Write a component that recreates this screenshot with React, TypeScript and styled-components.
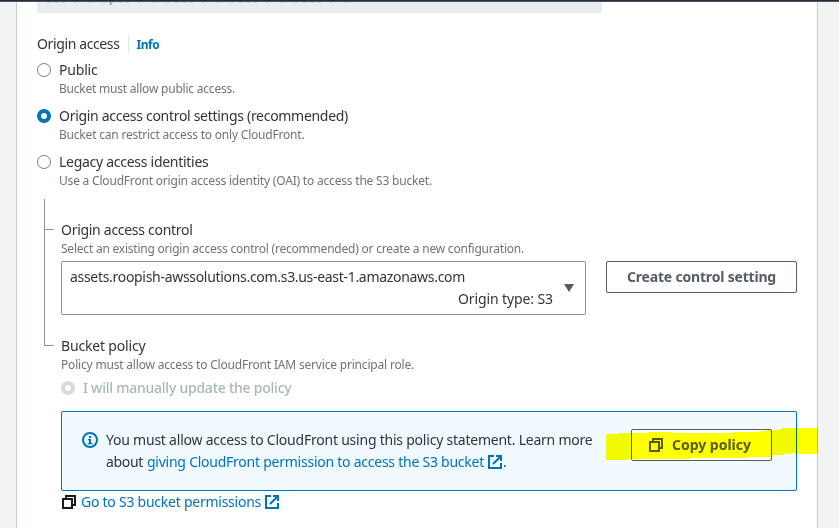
import React from "react";
import styled, { createGlobalStyle, css } from "styled-components";

const GlobalStyle = createGlobalStyle`
  * { box-sizing: border-box; }
  html, body { margin: 0; height: 528px; overflow: hidden; }
  body {
    background: #f2f3f3;
    color: #16191f;
    font: 400 14px/22px "Noto Sans", "Open Sans", sans-serif;
  }
`;

type Tracked = { $track?: number };
const tracking = css<Tracked>`
  letter-spacing: ${({ $track = -0.22 }) => $track}px;
  white-space: nowrap;
`;

const Page = styled.div`
  height: 528px;
  display: flex;
  flex-direction: column;
  overflow: hidden;
`;

const TopBar = styled.header`
  flex: none;
  height: 2px;
  background: #232f3e;
  border-bottom: 1px solid #4b5563;
`;

const Panel = styled.main`
  position: relative;
  width: 802px;
  flex: 1;
  margin-left: 16px;
  padding-left: 20px;
  background: #fff;
  border: solid #c3cbcd;
  border-width: 0 1px;
`;

const DisabledField = styled.div`
  width: 565px;
  height: 11px;
  overflow: hidden;
  background: #eaeded;
  border-radius: 0 0 2px 2px;
`;

const ClippedValue = styled.svg`
  display: block;
  width: 320px;
  height: 4px;
`;

const FieldHeader = styled.div`
  display: flex;
  align-items: center;
  height: 22px;
  margin-top: 20px;
`;

const Label = styled.div<Tracked>`
  height: 22px;
  color: #30343b;
  ${tracking}
`;

const InfoLink = styled.a<Tracked>`
  height: 18px;
  margin-left: 8px;
  padding-left: 8px;
  border-left: 1px solid #e3e8e8;
  color: #0073bb;
  font-size: 12px;
  font-weight: 700;
  line-height: 20px;
  ${tracking}
`;

const Description = styled.div<Tracked>`
  height: 16px;
  color: #6c747c;
  font-size: 12px;
  line-height: 16px;
  ${tracking}
`;

const RadioList = styled.div`
  display: grid;
  gap: 8px;
  margin-top: 4px;
`;

const RadioRow = styled.label`
  display: flex;
  gap: 8px;
`;

const RadioDot = styled.span<{ $state: "off" | "on" | "disabled" }>`
  flex: none;
  width: 14px;
  height: 14px;
  margin-top: 4px;
  border-radius: 50%;
  background: #fff;
  border: ${({ $state }) =>
    $state === "off" ? "1px solid #748284" : $state === "on" ? "4px solid #0073bb" : "4px solid #d5dbdb"};
`;

const DisabledLabel = styled(Label)`
  color: #aab7b8;
  font-weight: 500;
`;

const Nested = styled.section`
  display: flex;
  margin-top: 10px;
  padding-left: 7px;
`;

const Tree = styled.div`
  flex: none;
  width: 17px;
`;

const Branch = styled.div<{ $height: number }>`
  width: 10px;
  height: ${({ $height }) => $height}px;
  border: solid #879596;
  border-width: 0 0 1px 1px;
`;

const NestedBody = styled.div`
  width: 736px;
  padding-top: 20px;
`;

const ControlRow = styled.div`
  display: flex;
  align-items: flex-start;
  justify-content: space-between;
  margin-top: 4px;
`;

const Select = styled.div`
  display: flex;
  align-items: center;
  width: 525px;
  height: 54px;
  padding: 0 11px 0 8px;
  border: 1px solid #879596;
  border-radius: 2px;
`;

const SelectText = styled.div`
  display: grid;
  flex: 1;
  padding-right: 11px;
`;

const OriginType = styled(Label)`
  justify-self: end;
`;

const Button = styled.button<Tracked & { $width: number }>`
  display: flex;
  align-items: center;
  justify-content: center;
  flex: none;
  gap: 8px;
  width: ${({ $width }) => $width}px;
  height: 32px;
  padding: 0;
  background: #fff;
  border: 1px solid #545b64;
  border-radius: 2px;
  color: #545b64;
  font: 700 14px/20px "Noto Sans", sans-serif;
  ${tracking}
`;

const CopyButton = styled(Button)`
  gap: 9px;
  padding-right: 3px;
`;

const PolicyBlock = styled.div`
  margin-top: 20px;
`;

const PolicyOption = styled(RadioRow)`
  margin-top: 4px;
`;

const Alert = styled.div`
  display: flex;
  align-items: flex-start;
  height: 80px;
  margin-top: 12px;
  padding: 17px 24px 0 20px;
  background: #f1faff;
  border: 1px solid #0073bb;
  border-radius: 2px;
`;

const AlertIcon = styled.svg`
  flex: none;
  width: 16px;
  height: 16px;
  margin: 3px 8px 0 0;
`;

const AlertText = styled.div`
  flex: 1;
`;

const Line = styled.div`
  display: flex;
  align-items: center;
  height: 22px;
`;

const Link = styled.a<Tracked>`
  color: #0073bb;
  ${tracking}
`;

const Glyph = styled.svg<{ $left?: number }>`
  flex: none;
  width: 14px;
  height: 14px;
  margin-left: ${({ $left = 0 }) => $left}px;
`;

const InlineLabel = styled(Label)`
  margin-right: 4px;
`;

const Period = styled(Label)`
  margin-left: 1px;
`;

const FooterLink = styled(Link)`
  margin-left: 5px;
`;

const Marker = styled.svg`
  position: absolute;
  left: 589px;
  top: 426px;
  width: 212px;
  height: 33px;
  mix-blend-mode: multiply;
  pointer-events: none;
`;

const CopyIcon = ({ left, color }: { left?: number; color: string }) => (
  <Glyph $left={left} viewBox="0 0 14 14" fill="none" stroke={color} strokeWidth="2">
    <path d="M4 4V1H13V10H10" />
    <path d="M1 4H10V13H1Z" />
  </Glyph>
);

const ExternalIcon = ({ left }: { left?: number }) => (
  <Glyph $left={left} viewBox="0 0 14 14" fill="none" stroke="#0073bb" strokeWidth="2">
    <path d="M6 1H1V13H13V8" />
    <path d="M8 1H13V6M13 1L5 9" />
  </Glyph>
);

const Caret = () => (
  <svg width="10" height="8" viewBox="0 0 10 8">
    <path d="M0 0H10L5 8Z" fill="#545b64" />
  </svg>
);

const options = [
  { label: "Public", track: -0.2, text: "Bucket must allow public access.", textTrack: -0.216, state: "off" },
  {
    label: "Origin access control settings (recommended)",
    track: -0.295,
    text: "Bucket can restrict access to only CloudFront.",
    textTrack: -0.201,
    state: "on",
  },
  {
    label: "Legacy access identities",
    track: -0.277,
    text: "Use a CloudFront origin access identity (OAI) to access the S3 bucket.",
    textTrack: -0.196,
    state: "off",
  },
] as const;

export default function App() {
  return (
    <Page>
      <GlobalStyle />
      <TopBar />
      <Panel>
        <DisabledField>
          <ClippedValue viewBox="0 0 320 4" fill="none">
            <path d="M73.7 0V3" stroke="#87959b" strokeWidth="1.6" />
            <path
              d="M10 .4H312"
              stroke="#cdd1d4"
              strokeWidth=".8"
              strokeDasharray="4 4 3 3 4 8 3 12 4 9 5 5"
            />
          </ClippedValue>
        </DisabledField>
        <FieldHeader>
          <Label $track={-0.38}>Origin access</Label>
          <InfoLink $track={-0.5}>Info</InfoLink>
        </FieldHeader>
        <RadioList>
          {options.map((o) => (
            <RadioRow key={o.label}>
              <RadioDot $state={o.state} />
              <div>
                <Label $track={o.track}>{o.label}</Label>
                <Description $track={o.textTrack}>{o.text}</Description>
              </div>
            </RadioRow>
          ))}
        </RadioList>
        <Nested>
          <Tree>
            <Branch $height={31} />
            <Branch $height={116} />
          </Tree>
          <NestedBody>
            <Label $track={-0.289}>Origin access control</Label>
            <Description $track={-0.221}>
              Select an existing origin access control (recommended) or create a new configuration.
            </Description>
            <ControlRow>
              <Select>
                <SelectText>
                  <Label $track={-0.305}>assets.roopish-awssolutions.com.s3.us-east-1.amazonaws.com</Label>
                  <OriginType $track={-0.109}>Origin type: S3</OriginType>
                </SelectText>
                <Caret />
              </Select>
              <Button $width={191} $track={-0.188}>Create control setting</Button>
            </ControlRow>
            <PolicyBlock>
              <Label $track={-0.169}>Bucket policy</Label>
              <Description $track={-0.187}>
                Policy must allow access to CloudFront IAM service principal role.
              </Description>
              <PolicyOption>
                <RadioDot $state="disabled" />
                <DisabledLabel $track={-0.24}>I will manually update the policy</DisabledLabel>
              </PolicyOption>
            </PolicyBlock>
            <Alert>
              <AlertIcon viewBox="0 0 16 16" fill="none" stroke="#0073bb" strokeWidth="2">
                <circle cx="8" cy="8" r="7" />
                <path d="M7 4H9V6H7ZM6 7H9V11H10.5V12.3H5.7V11H7V8.3H6Z" fill="#0073bb" stroke="none" />
              </AlertIcon>
              <AlertText>
                <Line>
                  <Label $track={-0.224}>
                    You must allow access to CloudFront using this policy statement. Learn more
                  </Label>
                </Line>
                <Line>
                  <InlineLabel $track={-0.328}>about</InlineLabel>
                  <Link $track={-0.246}>giving CloudFront permission to access the S3 bucket</Link>
                  <ExternalIcon left={4} />
                  <Period>.</Period>
                </Line>
              </AlertText>
              <CopyButton $width={141} $track={-0.01}>
                <CopyIcon color="#545b64" />
                Copy policy
              </CopyButton>
            </Alert>
            <Line>
              <CopyIcon left={1} color="#16191f" />
              <FooterLink $track={-0.248}>Go to S3 bucket permissions</FooterLink>
              <ExternalIcon left={4} />
            </Line>
          </NestedBody>
        </Nested>
        <Marker viewBox="606 428 212 33" fill="#ffff00">
          <path d="M606 434H619V433H648V432H671V433H733V432H759V431H767V430H780V429H782V428H818V454H795V453H791V454H784V455H772V457H748V458H690V459H629V460H606Z" />
        </Marker>
      </Panel>
    </Page>
  );
}
